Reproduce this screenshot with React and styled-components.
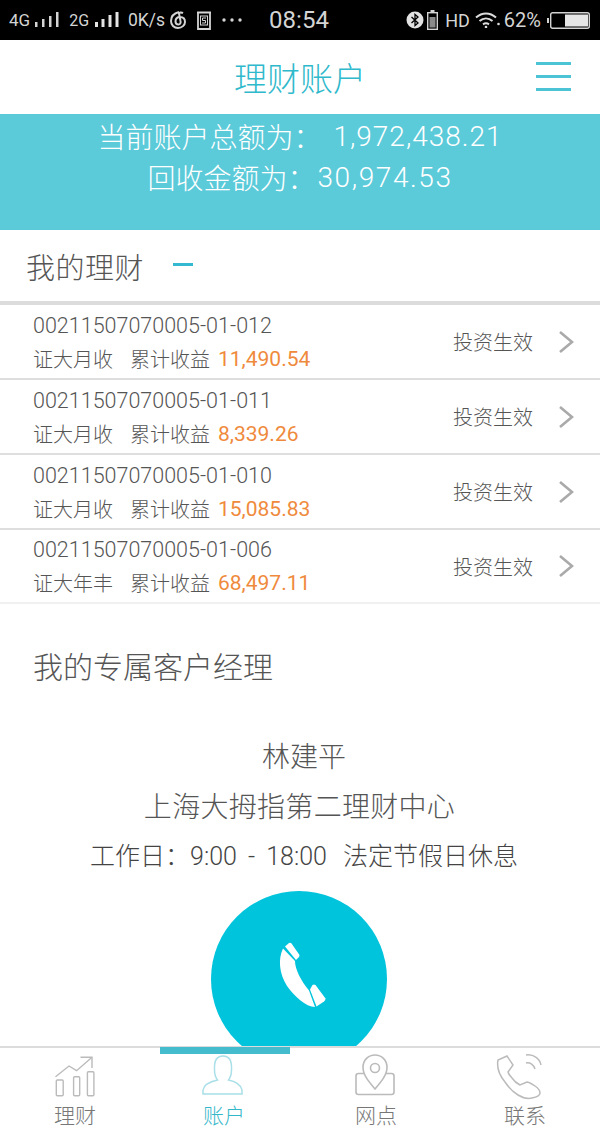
import styled, { createGlobalStyle } from "styled-components";

const GlobalStyle = createGlobalStyle`
  html, body {
    margin: 0;
    padding: 0;
    background: #fff;
  }
  * {
    box-sizing: border-box;
  }
`;

const FONT = `"Noto Sans CJK SC", "Noto Sans", sans-serif`;
const NUM = `Roboto, "Noto Sans CJK SC", sans-serif`;

const Page = styled.div`
  width: 600px;
  height: 1130px;
  display: flex;
  flex-direction: column;
  overflow: hidden;
  font-family: ${FONT};
  font-weight: 300;
  color: #555;
  background: #fff;
`;

const StatusBar = styled.div`
  height: 40px;
  flex: none;
  background: #000;
  color: #d4d4d4;
  display: flex;
  align-items: center;
  justify-content: space-between;
  padding: 0 10px 0 9px;
  font-family: ${NUM};
  font-weight: 400;
`;
const StatusGroup = styled.div`
  display: flex;
  align-items: center;
`;
const StatusText = styled.span`
  font-size: ${(p) => p.$size || 16}px;
  margin-left: ${(p) => p.$left || 0}px;
`;
const StatusIcon = styled.svg`
  display: block;
  flex: none;
  margin-left: ${(p) => p.$left || 0}px;
`;

const Header = styled.div`
  height: 74px;
  flex: none;
  display: flex;
  align-items: center;
  justify-content: center;
  position: relative;
`;
const Title = styled.h1`
  margin: 0;
  font-size: 33px;
  font-weight: 300;
  color: #2fb9cc;
`;
const Menu = styled.div`
  position: absolute;
  right: 29px;
  top: 22px;
  width: 35px;
  height: 29px;
  display: flex;
  flex-direction: column;
  justify-content: space-between;
  span {
    display: block;
    height: 3px;
    background: #4cc4d6;
  }
`;

const Banner = styled.div`
  height: 116px;
  flex: none;
  background: #5bcad9;
  color: #fff;
  font-size: 28px;
  line-height: 41px;
  padding-top: 2px;
`;
const BannerLine = styled.div`
  display: flex;
  justify-content: center;
  gap: ${(p) => p.$gap}px;
  b {
    font-family: ${NUM};
    font-weight: 300;
    letter-spacing: ${(p) => p.$track}px;
  }
`;

const SectionHead = styled.div`
  height: 75px;
  flex: none;
  display: flex;
  align-items: center;
  padding: 0 26px;
  border-bottom: 4px solid #dcdcdc;
  font-size: 29px;
  letter-spacing: 0.5px;
  color: #555;
`;
const Dash = styled.i`
  display: block;
  width: 20px;
  height: 3px;
  margin-left: 29px;
  margin-bottom: 3px;
  background: #35b9d0;
`;

const Row = styled.div`
  height: ${(p) => (p.$last ? 74 : 75)}px;
  flex: none;
  display: flex;
  align-items: center;
  justify-content: space-between;
  padding: 0 26px 0 33px;
  border-bottom: 2px solid ${(p) => (p.$last ? "#f0f0f0" : "#dedede")};
`;
const RowInfo = styled.div`
  display: flex;
  flex-direction: column;
  gap: 7px;
  padding-top: 1px;
`;
const Code = styled.div`
  font-family: ${NUM};
  font-size: 21.5px;
  line-height: 26px;
  color: #555;
`;
const Meta = styled.div`
  display: flex;
  align-items: center;
  font-size: 20px;
  line-height: 26px;
  color: #555;
`;
const Kind = styled.span`
  margin-right: 17px;
`;
const Gain = styled.span`
  font-family: ${NUM};
  font-weight: 400;
  font-size: 21px;
  color: #ef8a3c;
  margin-left: 8px;
`;
const RowSide = styled.div`
  display: flex;
  align-items: center;
  gap: 25px;
  font-size: 20px;
  color: #555;
`;

const Manager = styled.div`
  flex: 1;
  min-height: 0;
  overflow: hidden;
`;
const ManagerTitle = styled.h2`
  margin: 0;
  padding: 41px 0 0 33px;
  font-size: 30px;
  line-height: 40px;
  font-weight: 300;
  color: #555;
`;
const ManagerInfo = styled.div`
  margin-top: 51px;
  display: flex;
  flex-direction: column;
  align-items: center;
  gap: 11px;
  margin-left: 8px;
  color: #555;
`;
const Name = styled.div`
  font-size: 28px;
  line-height: 39px;
  margin-left: ${(p) => p.$shift || 0}px;
  letter-spacing: ${(p) => p.$track || 0}px;
`;
const Hours = styled.div`
  display: flex;
  gap: 16px;
  font-family: ${NUM};
  font-size: 25px;
  line-height: 39px;
  margin-top: 1px;
  color: #444;
  white-space: pre;
`;
const HoursTime = styled.span`
  word-spacing: 5px;
`;
const CallButton = styled.div`
  width: 176px;
  height: 176px;
  margin: 15px 0 0 211px;
  border-radius: 50%;
  background: #00c3dc;
  display: flex;
  align-items: center;
  justify-content: center;
`;
const CallGlyph = styled.svg`
  display: block;
  margin: 0 0 8px 3px;
`;

const TabBar = styled.div`
  height: 84px;
  flex: none;
  display: grid;
  grid-template-columns: repeat(4, 1fr);
  border-top: 2px solid #dcdcdc;
  position: relative;
  background: #fff;
`;
const Indicator = styled.div`
  position: absolute;
  top: -1px;
  left: 160px;
  width: 130px;
  height: 7px;
  background: #45bccd;
`;
const Tab = styled.div`
  display: flex;
  flex-direction: column;
  align-items: center;
  color: ${(p) => (p.$active ? "#35b7ca" : "#777")};
  font-size: 21px;
  line-height: 26px;
  padding-top: 2px;
  margin-left: ${(p) => p.$shift || 0}px;
`;
const TabGlyph = styled.svg`
  display: block;
  flex: none;
  margin-left: ${(p) => p.$shift || 0}px;
  margin-bottom: 1px;
`;

const items = [
  { code: "00211507070005-01-012", kind: "证大月收", gain: "11,490.54" },
  { code: "00211507070005-01-011", kind: "证大月收", gain: "8,339.26" },
  { code: "00211507070005-01-010", kind: "证大月收", gain: "15,085.83" },
  { code: "00211507070005-01-006", kind: "证大年丰", gain: "68,497.11" },
];

const SignalThin = ({ left }) => (
  <StatusIcon $left={left} width="24" height="16" viewBox="0 0 24 16" fill="#d4d4d4">
    <rect x="0" y="10" width="2.500" height="5" />
    <rect x="7" y="7" width="2.500" height="8" />
    <rect x="14" y="4" width="2.500" height="11" />
    <rect x="21" y="0" width="2.500" height="15" />
  </StatusIcon>
);

const SignalBold = ({ left }) => (
  <StatusIcon $left={left} width="24" height="16" viewBox="0 0 24 16" fill="#e4e4e4">
    <rect x="0" y="10" width="3" height="5" />
    <rect x="6.500" y="7" width="3" height="8" />
    <rect x="13.500" y="3" width="3" height="12" />
    <rect x="20.500" y="0" width="3" height="15" />
  </StatusIcon>
);

const MusicIcon = ({ left }) => (
  <StatusIcon $left={left} width="18" height="20" viewBox="0 0 18 20" fill="none" stroke="#d4d4d4" strokeWidth="2">
    <path d="M10 2 C6 3 2 6 2 11 C2 15 5 18 9 18 C13 18 16 15 16 12 C16 9 14 7 11 7 C8 7 6.500 9 6.500 11.500 C6.500 13.500 8 14.500 9.500 14.500 C11 14.500 12 13 11.500 11 L10 3.500 C10.500 2.500 12 2 14 3" />
  </StatusIcon>
);

const BoxIcon = ({ left }) => (
  <StatusIcon $left={left} width="16" height="19" viewBox="0 0 16 19" fill="none" stroke="#d4d4d4">
    <path d="M1 1.500 H15 M2 1.500 V18 H14 V1.500" strokeWidth="1.800" />
    <rect x="4.500" y="5" width="7" height="9" strokeWidth="1" />
    <path d="M10 7 H6.500 V9.500 H9.500 V12 H6" strokeWidth="1" />
  </StatusIcon>
);

const DotsIcon = ({ left }) => (
  <StatusIcon $left={left} width="20" height="6" viewBox="0 0 20 6" fill="#d4d4d4">
    <circle cx="2" cy="3" r="1.700" />
    <circle cx="10" cy="3" r="1.700" />
    <circle cx="18" cy="3" r="1.700" />
  </StatusIcon>
);

const BluetoothIcon = ({ left }) => (
  <StatusIcon $left={left} width="18" height="18" viewBox="0 0 18 18">
    <circle cx="9" cy="9" r="8.500" fill="#e2e2e2" />
    <path d="M5.500 6 L12 12 L9 14.500 V3.500 L12 6 L5.500 12" fill="none" stroke="#000" strokeWidth="1.300" />
  </StatusIcon>
);

const SmallBattery = ({ left }) => (
  <StatusIcon $left={left} width="11" height="20" viewBox="0 0 11 20">
    <rect x="3.500" y="0" width="4" height="2" fill="#d4d4d4" />
    <rect x="0.700" y="2.700" width="9.600" height="16.600" fill="none" stroke="#d4d4d4" strokeWidth="1.400" />
    <rect x="2.500" y="7" width="6" height="10.500" fill="#8a8a8a" />
  </StatusIcon>
);

const WifiIcon = ({ left }) => (
  <StatusIcon $left={left} width="25" height="16" viewBox="0 0 25 16" fill="none" stroke="#dcdcdc" strokeWidth="2">
    <path d="M1 5.500 C7 0 15 0 21 5.500" />
    <path d="M4.500 9 C8.500 5.500 13.500 5.500 17.500 9" />
    <path d="M8 12.300 C10 11 12 11 14 12.300" />
    <circle cx="11" cy="15" r="1.300" fill="#dcdcdc" stroke="none" />
    <circle cx="23.500" cy="12" r="1.300" fill="#dcdcdc" stroke="none" />
  </StatusIcon>
);

const BatteryIcon = ({ left }) => (
  <StatusIcon $left={left} width="43" height="17" viewBox="0 0 43 17">
    <rect x="0" y="6" width="2" height="5" fill="#d4d4d4" />
    <rect x="3.700" y="0.700" width="38.600" height="15.600" rx="2" fill="none" stroke="#d4d4d4" strokeWidth="1.400" />
    <rect x="18" y="2.500" width="23" height="12" fill="#e6e6e6" />
  </StatusIcon>
);

const Chevron = () => (
  <svg width="16" height="24" viewBox="0 0 16 24" fill="none" stroke="#aaa" strokeWidth="2.600">
    <path d="M2 2 L14 12 L2 22" />
  </svg>
);

const PhoneGlyph = () => (
  <CallGlyph width="50" height="68" viewBox="7 6 50 68" fill="#fff">
    <path d="M14 13.500 L26 26 C26 34 32 46 40 55.500 L46 72 C37 72 25 61 18 51 C10 38 9 24 14 13.500 Z" />
    <path d="M16 11.500 L20 8 Q21.500 7.500 22.500 8.500 L30.500 20 Q30.500 21.500 29.500 22.500 L27 25 Z" />
    <path d="M41 54.500 L43.500 50 Q45 49 46.500 50 L56.500 63.500 Q56.500 65.500 55 66.500 L47.500 71.500 Z" />
  </CallGlyph>
);

const ChartIcon = () => (
  <TabGlyph width="70" height="50" viewBox="0 0 70 50" fill="none" stroke="#bbb" strokeWidth="1.400">
    <path d="M15.500 26.700 L29 16 L36.600 20.700 L52 7.300" />
    <path d="M40.500 7.300 H52 V18" />
    <rect x="16.300" y="30" width="6.900" height="15.700" rx="1" />
    <rect x="33.600" y="26.700" width="6.100" height="19" rx="1" />
    <rect x="47.400" y="21.700" width="6.500" height="24" rx="1" />
  </TabGlyph>
);

const UserIcon = () => (
  <TabGlyph width="70" height="50" viewBox="0 0 70 50" fill="none" stroke="#a9dfe8" strokeWidth="1.500">
    <path d="M25.500 20 C25 10 28 6 34 6 C40 6 43 10 42.500 20 C42.500 25 41 28 39.500 30 C46 31.500 52 34 53 40 V44 H14 V40 C15 34 22 31.500 28.500 30 C27 28 25.500 25 25.500 20 Z" />
  </TabGlyph>
);

const PinIcon = () => (
  <TabGlyph $shift={8} width="70" height="50" viewBox="0 0 70 50" fill="none" stroke="#bbb" strokeWidth="1.600">
    <path d="M30 39 C24 32 18 25 18 17.500 C18 10 23.500 5 30 5 C36.500 5 42 10 42 17.500 C42 25 36 32 30 39 Z" />
    <circle cx="30" cy="18" r="4.500" />
    <path d="M19.500 23.500 H13.500 C12 23.500 11 24.500 11 26 V42 C11 43.500 12 44.500 13.500 44.500 H46.500 C48 44.500 49 43.500 49 42 V26 C49 24.500 48 23.500 46.500 23.500 H40.500" />
  </TabGlyph>
);

const PhoneIcon = () => (
  <TabGlyph $shift={-10} width="70" height="50" viewBox="0 0 70 50" fill="none" stroke="#bbb" strokeWidth="1.500">
    <path d="M22 6 L13 10 C11.500 18 15 26 20 32 C24 38 28 42 33 45 C38 48 43 49 47 48 C52 47 55 45 55 43 C55 40 53 38 50 36 C47 34 44 32 42 32 L35 35 C31 33 29 31 27 28 C25 26 23.500 24 23 22 L28 15 Z" />
    <path d="M41 13 C45 12 49 15 50 19" />
    <path d="M41 5 C49 4 55 9 56 15" />
  </TabGlyph>
);

const tabs = [
  { label: "理财", icon: <ChartIcon /> },
  { label: "账户", icon: <UserIcon />, active: true, shift: -2 },
  { label: "网点", icon: <PinIcon />, shift: 2 },
  { label: "联系", icon: <PhoneIcon /> },
];

export default function App() {
  return (
    <Page>
      <GlobalStyle />
      <StatusBar>
        <StatusGroup>
          <StatusText $size={17}>4G</StatusText>
          <SignalThin left={5} />
          <StatusText $left={10} $size={16}>
            2G
          </StatusText>
          <SignalBold left={6} />
          <StatusText $left={9} $size={17.500}>
            0K/s
          </StatusText>
          <MusicIcon left={4} />
          <BoxIcon left={9} />
          <DotsIcon left={10} />
          <StatusText $left={27} $size={24}>
            08:54
          </StatusText>
        </StatusGroup>
        <StatusGroup>
          <BluetoothIcon />
          <SmallBattery left={3} />
          <StatusText $left={7} $size={18}>
            HD
          </StatusText>
          <WifiIcon left={5} />
          <StatusText $left={4} $size={20}>
            62%
          </StatusText>
          <BatteryIcon left={6} />
        </StatusGroup>
      </StatusBar>
      <Header>
        <Title>理财账户</Title>
        <Menu>
          <span />
          <span />
          <span />
        </Menu>
      </Header>
      <Banner>
        <BannerLine $gap={12} $track={1}>
          当前账户总额为：<b>1,972,438.21</b>
        </BannerLine>
        <BannerLine $gap={2} $track={1.600}>
          回收金额为：<b>30,974.53</b>
        </BannerLine>
      </Banner>
      <SectionHead>
        我的理财
        <Dash />
      </SectionHead>
      {items.map((item, i) => (
        <Row key={item.code} $last={i === items.length - 1}>
          <RowInfo>
            <Code>{item.code}</Code>
            <Meta>
              <Kind>{item.kind}</Kind>
              累计收益
              <Gain>{item.gain}</Gain>
            </Meta>
          </RowInfo>
          <RowSide>
            投资生效
            <Chevron />
          </RowSide>
        </Row>
      ))}
      <Manager>
        <ManagerTitle>我的专属客户经理</ManagerTitle>
        <ManagerInfo>
          <Name>林建平</Name>
          <Name $shift={-9} $track={0.300}>
            上海大拇指第二理财中心
          </Name>
          <Hours>
            <HoursTime>工作日：9:00 - 18:00</HoursTime>
            <span>法定节假日休息</span>
          </Hours>
        </ManagerInfo>
        <CallButton>
          <PhoneGlyph />
        </CallButton>
      </Manager>
      <TabBar>
        <Indicator />
        {tabs.map((tab) => (
          <Tab key={tab.label} $active={tab.active} $shift={tab.shift}>
            {tab.icon}
            {tab.label}
          </Tab>
        ))}
      </TabBar>
    </Page>
  );
}
